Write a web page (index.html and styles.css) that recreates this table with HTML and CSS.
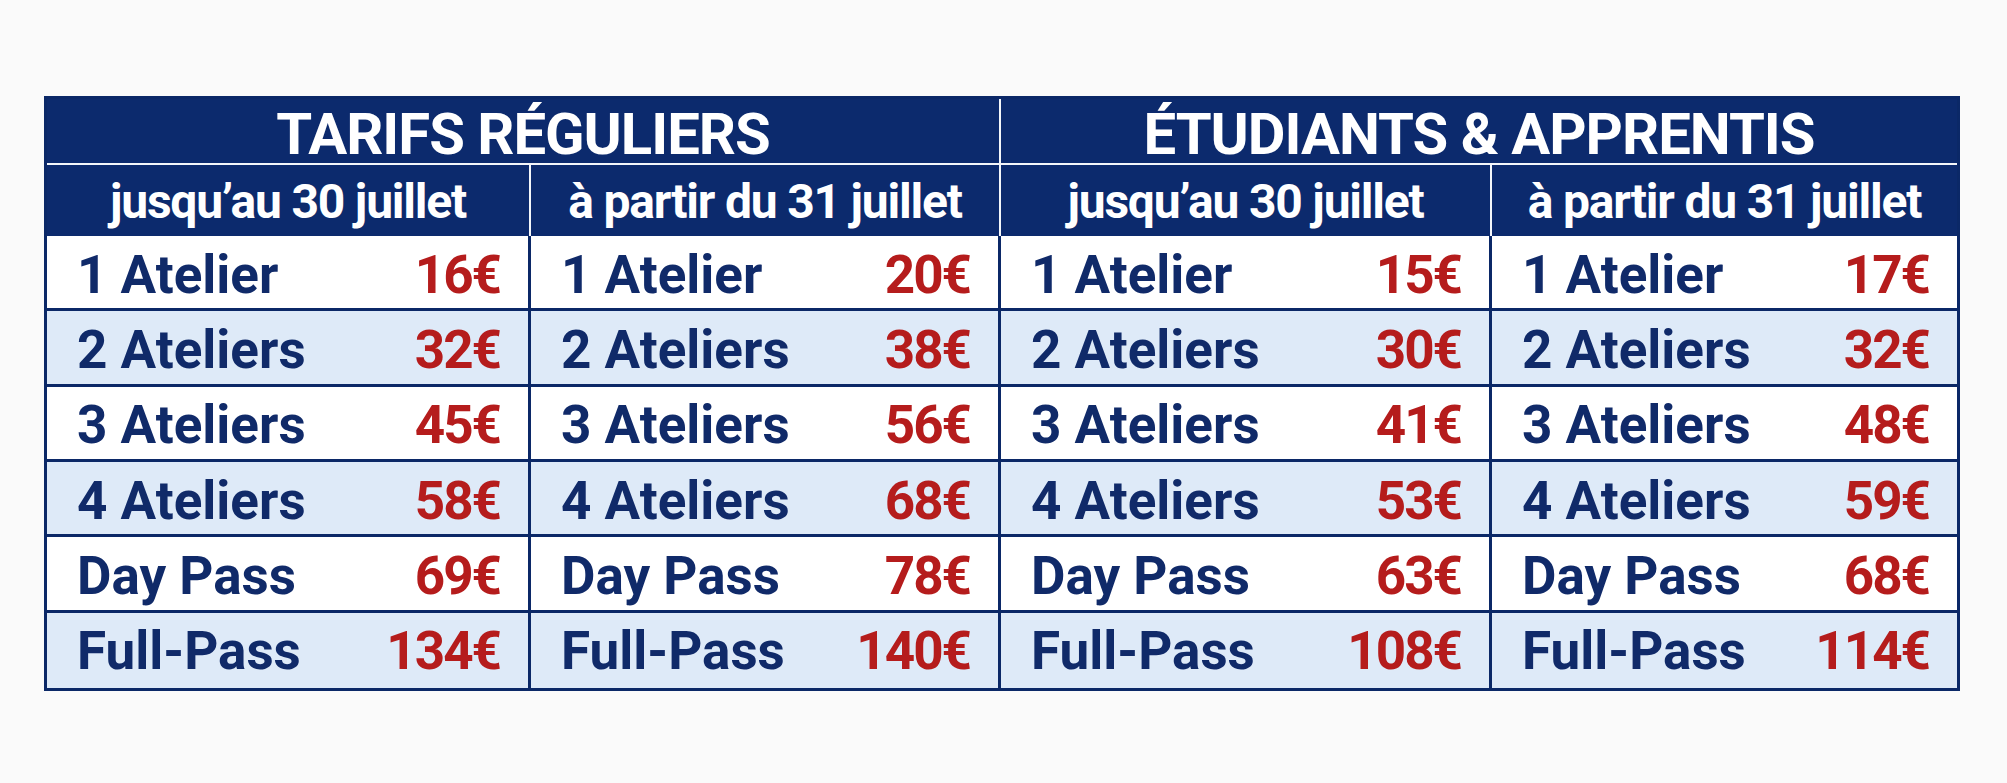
FILE: index.html
```html
<!DOCTYPE html>
<html lang="fr">
<head>
<meta charset="utf-8">
<title>Tarifs</title>
<link rel="stylesheet" href="styles.css">
</head>
<body>
<main class="page">
  <div class="prices">
    <div class="title title-first">TARIFS RÉGULIERS</div>
    <div class="title">ÉTUDIANTS &amp; APPRENTIS</div>

    <div class="sub">jusqu’au 30 juillet</div>
    <div class="sub">à partir du 31 juillet</div>
    <div class="sub">jusqu’au 30 juillet</div>
    <div class="sub sub-last">à partir du 31 juillet</div>

    <div class="cell"><span class="label">1 Atelier</span><span class="price">16€</span></div>
    <div class="cell"><span class="label">1 Atelier</span><span class="price">20€</span></div>
    <div class="cell"><span class="label">1 Atelier</span><span class="price">15€</span></div>
    <div class="cell end"><span class="label">1 Atelier</span><span class="price">17€</span></div>

    <div class="cell alt"><span class="label">2 Ateliers</span><span class="price">32€</span></div>
    <div class="cell alt"><span class="label">2 Ateliers</span><span class="price">38€</span></div>
    <div class="cell alt"><span class="label">2 Ateliers</span><span class="price">30€</span></div>
    <div class="cell alt end"><span class="label">2 Ateliers</span><span class="price">32€</span></div>

    <div class="cell"><span class="label">3 Ateliers</span><span class="price">45€</span></div>
    <div class="cell"><span class="label">3 Ateliers</span><span class="price">56€</span></div>
    <div class="cell"><span class="label">3 Ateliers</span><span class="price">41€</span></div>
    <div class="cell end"><span class="label">3 Ateliers</span><span class="price">48€</span></div>

    <div class="cell alt"><span class="label">4 Ateliers</span><span class="price">58€</span></div>
    <div class="cell alt"><span class="label">4 Ateliers</span><span class="price">68€</span></div>
    <div class="cell alt"><span class="label">4 Ateliers</span><span class="price">53€</span></div>
    <div class="cell alt end"><span class="label">4 Ateliers</span><span class="price">59€</span></div>

    <div class="cell"><span class="label">Day Pass</span><span class="price">69€</span></div>
    <div class="cell"><span class="label">Day Pass</span><span class="price">78€</span></div>
    <div class="cell"><span class="label">Day Pass</span><span class="price">63€</span></div>
    <div class="cell end"><span class="label">Day Pass</span><span class="price">68€</span></div>

    <div class="cell alt last"><span class="label">Full-Pass</span><span class="price">134€</span></div>
    <div class="cell alt last"><span class="label">Full-Pass</span><span class="price">140€</span></div>
    <div class="cell alt last"><span class="label">Full-Pass</span><span class="price">108€</span></div>
    <div class="cell alt last end"><span class="label">Full-Pass</span><span class="price">114€</span></div>
  </div>
</main>
</body>
</html>
```

FILE: styles.css
```css
html, body {
  margin: 0;
  padding: 0;
  background: #fafafa;
}

.page {
  padding: 96px 0 0 44px;
  font-family: Roboto, "Liberation Sans", sans-serif;
  font-weight: 700;
}

.prices {
  display: grid;
  grid-template-columns: 484px 470px 491px 465px;
  grid-template-rows: 66px 71px repeat(6, 75.33px);
  width: 1910px;
  border: 3px solid #0b2867;
  background: #0c2a6d;
}

.title {
  grid-column: span 2;
  display: flex;
  align-items: center;
  justify-content: center;
  padding-top: 6px;
  box-sizing: border-box;
  border-bottom: 2px solid #f4f6fa;
  color: #ffffff;
  font-size: 58px;
  letter-spacing: -1px;
  line-height: 1;
}

.title-first {
  border-right: 2px solid #f4f6fa;
}

.sub {
  display: flex;
  align-items: center;
  justify-content: center;
  padding-top: 2px;
  box-sizing: border-box;
  border-right: 2px solid #f4f6fa;
  color: #ffffff;
  font-size: 48px;
  letter-spacing: -1.2px;
  line-height: 1;
}

.sub-last {
  border-right: none;
}

.cell {
  display: flex;
  align-items: center;
  justify-content: space-between;
  box-sizing: border-box;
  padding: 6px 28px 0 30px;
  background: #ffffff;
  border-right: 3px solid #0b2867;
  border-bottom: 3px solid #0b2867;
  font-size: 53px;
  line-height: 1;
}

.cell.alt {
  background: #deeaf8;
}

.cell.end {
  border-right: none;
}

.cell.last {
  border-bottom: none;
  padding-top: 3px;
}

.label {
  color: #102a69;
}

.price {
  color: #b51c1c;
  letter-spacing: -2px;
}
```
